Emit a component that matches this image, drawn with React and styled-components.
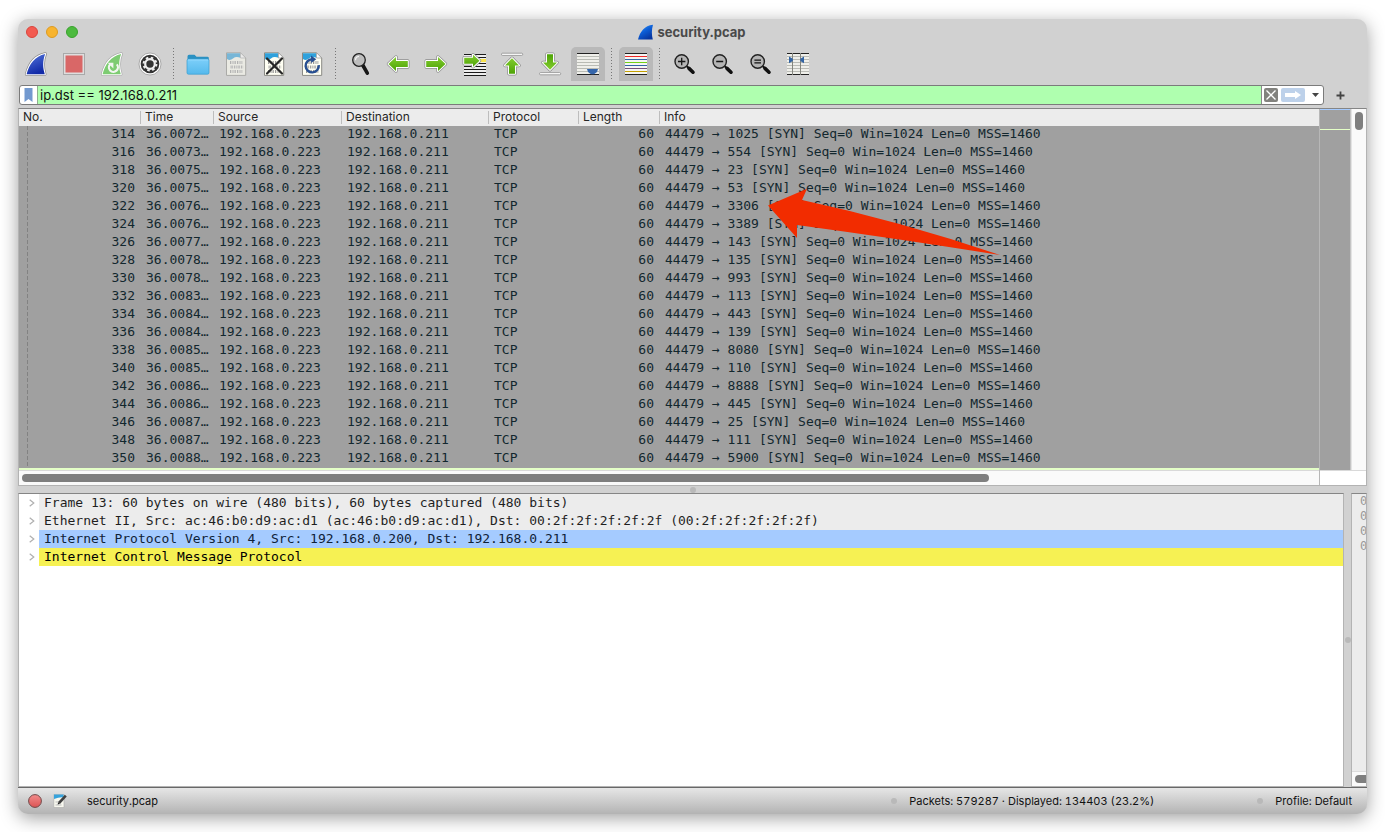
import React from "react";
import styled, { createGlobalStyle } from "styled-components";

const ui = `Inter, "Noto Sans", sans-serif`;
const mono = `"DejaVu Sans Mono", "Liberation Mono", monospace`;

const Global = createGlobalStyle`
  * { box-sizing: border-box; }
  body { margin: 0; background: #fff; font-family: ${ui}; }
  button { border: 0; padding: 0; background: none; font: inherit; }
`;

const Page = styled.div`
  min-height: 100vh;
  padding: 19px 18px 18px;
  display: flex;
  overflow: hidden;
`;

const Window = styled.main`
  flex: 1;
  min-width: 0;
  display: flex;
  flex-direction: column;
  background: #d1d1d1;
  border-radius: 10px;
  overflow: hidden;
  box-shadow: 0 4px 18px rgba(0, 0, 0, 0.38);
`;

const TitleBar = styled.header`
  display: grid;
  grid-template-columns: 1fr auto 1fr;
  align-items: center;
  height: 26px;
  padding: 0 10px 0 8px;
`;

const Lights = styled.div`
  display: flex;
  gap: 8px;
`;

const Light = styled.button`
  width: 12px;
  height: 12px;
  border-radius: 50%;
  background: ${(p) => p.$fill};
  border: 1px solid ${(p) => p.$edge};
`;

const Title = styled.h1`
  display: flex;
  align-items: center;
  gap: 3px;
  margin: 0;
  font-size: 13px;
  line-height: 16px;
  font-weight: 700;
  color: #4a4a4a;
`;

const ToolBar = styled.nav`
  display: flex;
  align-items: center;
  gap: 4px;
  height: 38px;
  padding: 0 1px;
`;

const Tool = styled.button`
  width: 34px;
  height: 34px;
  display: grid;
  place-items: center;
  border-radius: 5px 5px 0 0;
  background: ${(p) => (p.$on ? "#b9b9b9" : "transparent")};
  svg { width: 24px; height: 24px; }
`;

const Divider = styled.span`
  width: 1px;
  height: 32px;
  margin: 0 3px 0 2px;
  background: repeating-linear-gradient(#777 0 1px, transparent 1px 3px);
`;

const FilterBar = styled.form`
  display: flex;
  align-items: center;
  padding: 2px 22px 2px 1px;
`;

const FilterField = styled.div`
  flex: 1;
  display: flex;
  height: 20px;
  border: 1px solid #7b7b7b;
  border-radius: 3px;
  background: #fff;
  overflow: hidden;
`;

const BookmarkButton = styled.button`
  width: 17px;
  display: grid;
  place-items: center;
`;

const FilterInput = styled.input`
  flex: 1;
  min-width: 0;
  border: 0;
  border-left: 1px solid #8fae8f;
  border-right: 1px solid #8b8b8b;
  padding: 0 2px;
  outline: 0;
  background: #afffaf;
  color: #111;
  font: 13px/18px ${ui};
`;

const FilterActions = styled.div`
  display: flex;
  align-items: center;
  gap: 3px;
  padding-left: 2px;
`;

const ActionButton = styled.button`
  width: ${(p) => p.$w}px;
  height: 14px;
  border-radius: 2px;
  display: grid;
  place-items: center;
  background: ${(p) => p.$bg || "transparent"};
`;

const AddButton = styled.button`
  width: 9px;
  height: 9px;
  margin-left: 12px;
  display: grid;
  place-items: center;
`;

const ListPane = styled.section`
  position: relative;
  display: flex;
  margin-top: 1px;
  border: 1px solid #b3b3b3;
  border-top: 1px solid #858585;
  background: #fff;
`;

const ListMain = styled.div`
  flex: 1;
  min-width: 0;
`;

const PacketTable = styled.table`
  width: 100%;
  table-layout: fixed;
  border-collapse: separate;
  border-spacing: 0;
  border-bottom: 2px solid #e4ffc7;
`;

const HeadCell = styled.th`
  height: 17px;
  padding: 0 4px 2px 5px;
  text-align: left;
  background: linear-gradient(#bdbdbd, #bdbdbd) left 2px / 1px 13px no-repeat #ececec;
  color: #262626;
  font: 12px/15px ${ui};
  &:first-child { padding-left: 4px; background: #ececec; }
`;

const Cell = styled.td`
  height: 18px;
  padding: 0 5px 2px 6px;
  background: #a0a0a0;
  color: #12272e;
  font: 13px/16px ${mono};
  white-space: pre;
  overflow: hidden;
  text-align: ${(p) => (p.$right ? "right" : "left")};
  &:first-child {
    background: repeating-linear-gradient(#828282 0 4px, transparent 4px 6px) 8px 0 / 1px 100% no-repeat #a0a0a0;
  }
`;

const HScroll = styled.div`
  height: 15px;
  padding: 3px;
  border-top: 1px solid #d9d9d9;
  background: #fafafa;
`;

const Thumb = styled.div`
  border-radius: 4px;
  background: #7f7f7f;
  width: ${(p) => p.$w || "8px"};
  height: ${(p) => p.$h || "8px"};
`;

const ListSide = styled.aside`
  width: 47px;
  flex: none;
  display: flex;
  flex-direction: column;
  border-left: 1px solid #b7b7b7;
`;

const SideTop = styled.div`
  flex: 1;
  display: flex;
`;

const MiniMap = styled.div`
  flex: 1;
  border-right: 1px solid #c4c4c4;
  background: linear-gradient(#a5cbff, #a5cbff) 0 0 / 100% 1px no-repeat,
    linear-gradient(#e4ffc7, #e4ffc7) 0 20px / 100% 1px no-repeat #a0a0a0;
`;

const VScroll = styled.div`
  width: 15px;
  padding: 3px 4px 3px 3px;
  background: #fafafa;
  border-left: 1px solid #e3e3e3;
`;

const SideCorner = styled.div`
  height: 15px;
  border-top: 1px solid #d9d9d9;
`;

const Pointer = styled.svg`
  position: absolute;
  left: 749px;
  top: 79px;
  width: 234px;
  height: 68px;
`;

const Splitter = styled.div`
  display: grid;
  place-items: center;
  flex: none;
  ${(p) => (p.$vertical ? "width: 7px;" : "height: 7px;")}
`;

const Dot = styled.i`
  width: 6px;
  height: 6px;
  border-radius: 50%;
  background: #b9b9b9;
`;

const LowerPanes = styled.div`
  flex: 1;
  display: flex;
`;

const TreePane = styled.section`
  flex: 1;
  min-width: 0;
  border: 1px solid #b3b3b3;
  border-top-color: #858585;
  background: #fff;
`;

const Tree = styled.ul`
  list-style: none;
  margin: 0;
  padding: 0;
`;

const TreeRow = styled.li`
  display: flex;
  height: 18px;
`;

const Expander = styled.button`
  width: 20px;
  padding-left: 5px;
  display: grid;
  place-items: center;
`;

const TreeText = styled.span`
  flex: 1;
  padding: 0 5px;
  background: ${(p) => p.$bg};
  color: ${(p) => p.$ink || "#1f1f1f"};
  font: 13px/18px ${mono};
  white-space: pre;
`;

const BytesPane = styled.section`
  width: 16px;
  flex: none;
  display: flex;
  flex-direction: column;
  justify-content: space-between;
  border: 1px solid #b3b3b3;
  border-top-color: #858585;
  background: #ececec;
  overflow: hidden;
`;

const Offsets = styled.div`
  padding-left: 8px;
  color: #999;
  font: 12px/15px ${mono};
`;

const BytesScroll = styled.div`
  height: 15px;
  padding: 3px 0 0 3px;
  background: #fafafa;
  border-top: 1px solid #ddd;
`;

const StatusBar = styled.footer`
  display: flex;
  align-items: center;
  height: 27px;
  padding: 0 15px 0 10px;
  border-top: 1px solid #686868;
  background: linear-gradient(#e6e6e6, #b3b3b3);
  color: #111;
  font: 11px/14px ${ui};
  font-variant-numeric: tabular-nums;
`;

const StatusButton = styled.button`
  width: 14px;
  height: 14px;
  margin-right: 11px;
  display: grid;
  place-items: center;
`;

const StatusText = styled.span`
  margin-left: 12px;
  white-space: nowrap;
`;

const Gap = styled.span`
  width: ${(p) => p.$w};
  flex: ${(p) => (p.$w ? "none" : 1)};
`;

const Halo = ({ d, fill, edge = "#8d8d8d" }) => (
  <g strokeLinejoin="round">
    <path d={d} fill="none" stroke={edge} strokeWidth="3.4" />
    <path d={d} fill="none" stroke="#fff" strokeWidth="2" />
    <path d={d} fill={fill} />
  </g>
);

const Defs = () => (
  <svg width="0" height="0" style={{ position: "absolute" }} aria-hidden="true">
    <defs>
      <linearGradient id="blue" x1="0" y1="0" x2="0.4" y2="1">
        <stop offset="0" stopColor="#5577dd" /><stop offset="1" stopColor="#122ba8" />
      </linearGradient>
      <linearGradient id="brand" x1="0" y1="0" x2="0.6" y2="1">
        <stop offset="0" stopColor="#49a0f5" /><stop offset="0.5" stopColor="#0c5fd8" /><stop offset="1" stopColor="#0736a0" />
      </linearGradient>
      <linearGradient id="green" x1="0" y1="0" x2="0" y2="1">
        <stop offset="0" stopColor="#82cc2e" /><stop offset="1" stopColor="#4ea307" />
      </linearGradient>
      <linearGradient id="folder" x1="0" y1="0" x2="0" y2="1">
        <stop offset="0" stopColor="#7dcffa" /><stop offset="1" stopColor="#55b9ec" />
      </linearGradient>
      <linearGradient id="record" x1="0" y1="0" x2="0" y2="1">
        <stop offset="0" stopColor="#f28c8c" /><stop offset="1" stopColor="#dc5454" />
      </linearGradient>
    </defs>
  </svg>
);

const finPath = "M2.6 22.2C5 12.5 11 4 21.2 2C18.4 9 18.8 16 20.8 22.2Z";

const Fin = () => <svg viewBox="0 0 24 24"><Halo d={finPath} fill="url(#blue)" /></svg>;

const Stop = () => (
  <svg viewBox="0 0 24 24">
    <rect x="1.5" y="1.5" width="21" height="21" fill="#dedede" stroke="#a9a9a9" />
    <rect x="3.5" y="3.5" width="17" height="17" fill="#d96767" />
  </svg>
);

const Restart = () => (
  <svg viewBox="0 0 24 24">
    <Halo d={finPath} fill="#7dcc72" edge="#adadad" />
    <path d="M10.2 12.2A4.5 4.5 0 1 0 16.8 12.4" fill="none" stroke="#f1f6f0" strokeWidth="2.2" />
    <path d="M7.6 10.8H13.4V16.4Z" fill="#f1f6f0" />
  </svg>
);

const Gear = () => (
  <svg viewBox="0 0 24 24">
    <circle cx="12" cy="12" r="11" fill="#fff" stroke="#999" strokeWidth="0.8" />
    <circle cx="12" cy="12" r="9.3" fill="#333" />
    <circle cx="12" cy="12" r="6.4" fill="none" stroke="#eee" strokeWidth="2" strokeDasharray="2.5 2.53" />
    <circle cx="12" cy="12" r="4.8" fill="none" stroke="#eee" strokeWidth="2.2" />
  </svg>
);

const Folder = () => (
  <svg viewBox="0 0 24 24">
    <path d="M1.5 4.5Q1.5 2.8 3 2.8H8.5L10.5 4.8H21.5Q22.8 4.8 22.8 6V10H1.5Z" fill="#2b91c2" />
    <rect x="1" y="7" width="22" height="15.2" rx="1.5" fill="url(#folder)" stroke="#3a9fd0" strokeWidth="0.7" />
    <path d="M2 8h20" stroke="#9bdcff" strokeWidth="0.8" />
  </svg>
);

const Sheet = ({ children, faded }) => (
  <svg viewBox="0 0 24 24">
    <g opacity={faded ? 0.55 : 1}>
      <path d="M2.5 .8H16.5L21.7 6V23.4H2.5Z" fill="#fffff3" stroke="#8a8a85" />
      <path d="M3 1.2H16.3V5.8Q12 4 9 6.5T3 7Z" fill="#2fa1dc" />
      <path d="M16.5 .8V6H21.7Z" fill="#fff" stroke="#999" strokeWidth="0.7" />
      <g stroke="#999" strokeWidth="3" strokeDasharray="1 .7 .8 1">
        <path d="M6 10.4h12.5M6.6 15h12.5M6 19.6h12.5" />
      </g>
    </g>
    {children}
  </svg>
);

const CloseFile = () => (
  <Sheet><path d="M5 6.5L20 21.5M20 6.5L5 21.5" stroke="#262626" strokeWidth="2.2" strokeLinecap="round" /></Sheet>
);

const ReloadFile = () => (
  <Sheet>
    <path d="M18.8 13.2A6.6 6.6 0 1 1 12 7.2" fill="none" stroke="#284f91" strokeWidth="2.4" />
    <path d="M11 3.5L16.3 7.2L11.2 11Z" fill="#284f91" />
  </Sheet>
);

const Find = () => (
  <svg viewBox="0 0 24 24">
    <path d="M15 13.5L19.3 21.2" stroke="#181818" strokeWidth="3.6" strokeLinecap="round" />
    <path d="M13.6 12L15.5 15" stroke="#181818" strokeWidth="2" />
    <circle cx="11" cy="8" r="6.3" fill="#bdbdbd" stroke="#202020" strokeWidth="1.3" />
    <path d="M7.5 8.2A3.8 3.8 0 0 1 11 4.4" fill="none" stroke="#f3f3f3" strokeWidth="1.2" />
  </svg>
);

const Lens = ({ sign }) => (
  <svg viewBox="0 0 24 24">
    <path d="M14.5 14L17 16.2" stroke="#111" strokeWidth="2" />
    <path d="M17 16.4L21 20.2" stroke="#111" strokeWidth="3.6" strokeLinecap="round" />
    <circle cx="9.7" cy="9.5" r="6.7" fill="#b5b5b5" stroke="#222" strokeWidth="1.4" />
    <path d={sign} stroke="#151515" strokeWidth="1.3" />
  </svg>
);

const Left = () => <svg viewBox="0 0 24 24"><Halo d="M2.5 12L10 5V9H21.8V15H10V19Z" fill="url(#green)" /></svg>;
const Right = () => <svg viewBox="0 0 24 24"><Halo d="M21.5 12L14 5V9H2.2V15H14V19Z" fill="url(#green)" /></svg>;

const GoTo = () => (
  <svg viewBox="0 0 24 24">
    <rect x="2" y="2" width="22" height="21.5" fill="#eee" />
    <path d="M2 2.5H24M2 5.5H24M2 11.5H24M2 14.5H24M2 17.5H24M2 20.5H24M2 23.5H24" stroke="#1b1b1b" />
    <rect x="18" y="7" width="6" height="3" fill="#f8e24c" />
    <Halo d="M17.5 8.8L11 2.8V5.8H2.2V11.8H11V14.8Z" fill="url(#green)" />
  </svg>
);

const EdgeArrow = ({ down }) => (
  <svg viewBox="0 0 24 24">
    <g transform={down ? "translate(0 24) scale(1 -1)" : undefined}>
      <rect x="1.5" y="1.2" width="21.2" height="2.2" rx="1.1" fill="#fff" stroke="#8d8d8d" strokeWidth="0.8" />
      <Halo d="M12 6.2L19 13.5H15V21.8H9V13.5H5Z" fill="url(#green)" />
    </g>
  </svg>
);

const AutoScroll = () => (
  <svg viewBox="0 0 24 24">
    <rect x="1" y="1" width="22" height="22" fill="#efefea" />
    <path d="M1 4.5H23M1 7.5H23M1 10.5H23M1 13.5H23M1 16.5H23M1 19.5H23" stroke="#b9bbb4" />
    <path d="M1 1.5H23M1 22.5H23" stroke="#222" />
    <path d="M11 17H22L21 20L18 22.3H15L12 20Z" fill="#3566ab" />
  </svg>
);

const stripes = ["#222222", "#ef2929", "#3465a4", "#73d216", "#3465a4", "#75507b", "#c4a000", "#222222"];

const Colorize = () => (
  <svg viewBox="0 0 24 24">
    <rect x="1" y="1" width="22" height="22" fill="#f6f6f3" />
    {stripes.map((c, i) => <path key={i} d={`M1 ${1.5 + i * 3}H23`} stroke={c} />)}
  </svg>
);

const Columns = () => (
  <svg viewBox="0 0 24 24">
    <rect x="1" y="1" width="22" height="22" fill="#efefea" />
    <path d="M1 4.5H23M1 7.5H23M1 10.5H23M1 13.5H23M1 16.5H23M1 19.5H23" stroke="#babbb5" />
    <path d="M1 1.5H23M1 22.5H23" stroke="#222" />
    <path d="M6.5 1V23M14.5 1V23" stroke="#85867f" />
    <path d="M3 4.5L6.8 6.8V9L3 11.2ZM18 4.5L14.4 6.8V9L18 11.2Z" fill="#3465a4" />
  </svg>
);

const tools = [
  ["Start capture", <Fin />], ["Stop capture", <Stop />], ["Restart capture", <Restart />], ["Capture options", <Gear />], null,
  ["Open file", <Folder />], ["Save file", <Sheet faded />], ["Close file", <CloseFile />], ["Reload file", <ReloadFile />], null,
  ["Find packet", <Find />], ["Previous packet", <Left />], ["Next packet", <Right />], ["Go to packet", <GoTo />],
  ["First packet", <EdgeArrow />], ["Last packet", <EdgeArrow down />], ["Auto scroll", <AutoScroll />, true], null,
  ["Colorize", <Colorize />, true], null,
  ["Zoom in", <Lens sign="M6 9.5H13.4M9.7 5.8V13.2" />], ["Zoom out", <Lens sign="M6.2 9.5H13.2" />],
  ["Normal size", <Lens sign="M6.4 8.2H13M6.4 10.8H13" />], ["Resize columns", <Columns />],
];

const columns = [["No.", 121], ["Time", 73], ["Source", 128], ["Destination", 147], ["Protocol", 90], ["Length", 81], ["Info"]];

const packets = [
  [314, "36.0072…", 1025], [316, "36.0073…", 554], [318, "36.0075…", 23], [320, "36.0075…", 53],
  [322, "36.0076…", 3306], [324, "36.0076…", 3389], [326, "36.0077…", 143], [328, "36.0078…", 135],
  [330, "36.0078…", 993], [332, "36.0083…", 113], [334, "36.0084…", 443], [336, "36.0084…", 139],
  [338, "36.0085…", 8080], [340, "36.0085…", 110], [342, "36.0086…", 8888], [344, "36.0086…", 445],
  [346, "36.0087…", 25], [348, "36.0087…", 111], [350, "36.0088…", 5900],
];

const layers = [
  ["Frame 13: 60 bytes on wire (480 bits), 60 bytes captured (480 bits)", "#ececec"],
  ["Ethernet II, Src: ac:46:b0:d9:ac:d1 (ac:46:b0:d9:ac:d1), Dst: 00:2f:2f:2f:2f:2f (00:2f:2f:2f:2f:2f)", "#ececec"],
  ["Internet Protocol Version 4, Src: 192.168.0.200, Dst: 192.168.0.211", "#a5cbff", "#0f2238"],
  ["Internet Control Message Protocol", "#f6f153", "#000"],
];

export default function App() {
  return (
    <Page>
      <Global />
      <Defs />
      <Window>
        <TitleBar>
          <Lights>
            <Light aria-label="Close" $fill="#f35b51" $edge="#d9453c" />
            <Light aria-label="Minimize" $fill="#f8b42f" $edge="#dc9a22" />
            <Light aria-label="Zoom" $fill="#4cba3e" $edge="#3aa22e" />
          </Lights>
          <Title>
            <svg width="17" height="17" viewBox="0 0 17 17">
              <path d="M1 15.5C3 8 7.5 1.5 16 .8C14.5 5.5 14.6 11 15.8 15.5Z" fill="url(#brand)" />
            </svg>
            security.pcap
          </Title>
        </TitleBar>

        <ToolBar aria-label="Main toolbar">
          {tools.map((t, i) =>
            t ? <Tool key={i} type="button" aria-label={t[0]} $on={t[2]}>{t[1]}</Tool> : <Divider key={i} />
          )}
        </ToolBar>

        <FilterBar onSubmit={(e) => e.preventDefault()}>
          <FilterField>
            <BookmarkButton type="button" aria-label="Bookmarks">
              <svg width="9" height="14" viewBox="0 0 9 14"><path d="M.5 0H8.5V14L4.5 11L.5 14Z" fill="#7299cf" /></svg>
            </BookmarkButton>
            <FilterInput aria-label="Display filter" defaultValue="ip.dst == 192.168.0.211" />
            <FilterActions>
              <ActionButton type="button" aria-label="Clear filter" $w={14} $bg="#82827e">
                <svg width="10" height="10" viewBox="0 0 10 10"><path d="M.5 .5L9.5 9.5M9.5 .5L.5 9.5" stroke="#fff" strokeWidth="1.3" /></svg>
              </ActionButton>
              <ActionButton type="submit" aria-label="Apply filter" $w={24} $bg="#bdd1ea">
                <svg width="16" height="8" viewBox="0 0 16 8"><path d="M0 2H10V0L16 4L10 8V6H0Z" fill="#fff" /></svg>
              </ActionButton>
              <ActionButton type="button" aria-label="Filter history" $w={15}>
                <svg width="7" height="4" viewBox="0 0 7 4"><path d="M0 0H7L3.5 4Z" fill="#444" /></svg>
              </ActionButton>
            </FilterActions>
          </FilterField>
          <AddButton type="button" aria-label="Add filter button">
            <svg width="9" height="9" viewBox="0 0 9 9"><path d="M4.5 .5V8.5M.5 4.5H8.5" stroke="#444" strokeWidth="1.8" /></svg>
          </AddButton>
        </FilterBar>

        <ListPane>
          <ListMain>
            <PacketTable>
              <colgroup>{columns.map(([n, w]) => <col key={n} width={w} />)}</colgroup>
              <thead><tr>{columns.map(([n]) => <HeadCell key={n}>{n}</HeadCell>)}</tr></thead>
              <tbody>
                {packets.map(([no, time, port]) => (
                  <tr key={no}>
                    <Cell $right>{no}</Cell>
                    <Cell>{time}</Cell>
                    <Cell>192.168.0.223</Cell>
                    <Cell>192.168.0.211</Cell>
                    <Cell>TCP</Cell>
                    <Cell $right>60</Cell>
                    <Cell>{`44479 → ${port} [SYN] Seq=0 Win=1024 Len=0 MSS=1460`}</Cell>
                  </tr>
                ))}
              </tbody>
            </PacketTable>
            <HScroll><Thumb $w="calc(75% - 4px)" /></HScroll>
          </ListMain>
          <ListSide>
            <SideTop>
              <MiniMap />
              <VScroll><Thumb $h="18px" /></VScroll>
            </SideTop>
            <SideCorner />
          </ListSide>
          <Pointer viewBox="0 0 234 68" aria-hidden="true">
            <path d="M0 17.5L39 .8L34 12Q132 33 232 67Q132 51 29 37V50Z" fill="#f22c00" />
          </Pointer>
        </ListPane>

        <Splitter><Dot /></Splitter>

        <LowerPanes>
          <TreePane>
            <Tree>
              {layers.map(([text, bg, ink]) => (
                <TreeRow key={text}>
                  <Expander type="button" aria-label="Expand">
                    <svg width="6" height="8" viewBox="0 0 6 8"><path d="M.7 .7L4.8 4L.7 7.3" fill="none" stroke="#b0b0b0" strokeWidth="1.2" /></svg>
                  </Expander>
                  <TreeText $bg={bg} $ink={ink}>{text}</TreeText>
                </TreeRow>
              ))}
            </Tree>
          </TreePane>
          <Splitter $vertical><Dot /></Splitter>
          <BytesPane>
            <Offsets>{[0, 1, 2, 3].map((n) => <div key={n}>0</div>)}</Offsets>
            <BytesScroll><Thumb $w="20px" /></BytesScroll>
          </BytesPane>
        </LowerPanes>

        <StatusBar>
          <StatusButton type="button" aria-label="Expert information">
            <svg width="14" height="14" viewBox="0 0 14 14"><circle cx="7" cy="7" r="6.4" fill="url(#record)" stroke="#704a4a" /></svg>
          </StatusButton>
          <StatusButton type="button" aria-label="Capture comments">
            <svg width="14" height="14" viewBox="0 0 14 14">
              <path d="M.8 .5H11V13.5H.8Z" fill="#f8f8ef" stroke="#aaa" strokeWidth="0.6" />
              <path d="M1 .6H10.6V3.4Q6 3 1 5Z" fill="#37a3dc" />
              <path d="M2.5 8H5M2.5 11H8.5" stroke="#bbb" />
              <path d="M6 9L12.8 1.6" stroke="#404040" strokeWidth="2.6" />
              <path d="M4.6 10.4L5.2 8.2L6.9 9.7Z" fill="#222" />
            </svg>
          </StatusButton>
          <Gap $w="9px" />
          <span>security.pcap</span>
          <Gap />
          <Dot />
          <StatusText>Packets: 579287 · Displayed: 134403 (23.2%)</StatusText>
          <Gap $w="103px" />
          <Dot />
          <StatusText>Profile: Default</StatusText>
        </StatusBar>
      </Window>
    </Page>
  );
}
